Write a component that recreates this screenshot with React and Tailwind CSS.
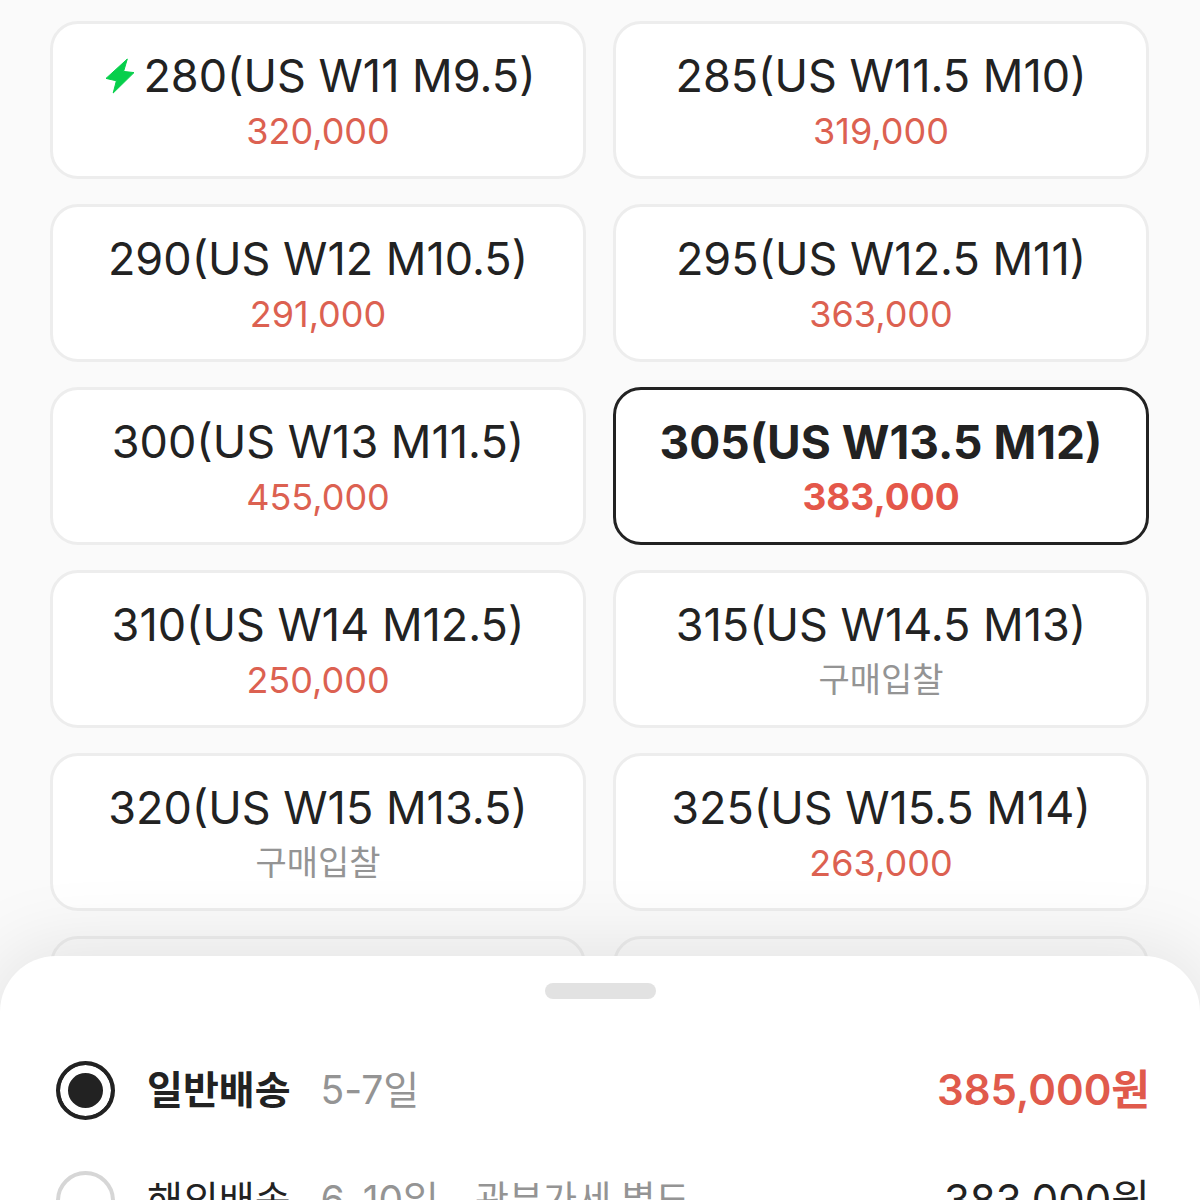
import { useState } from 'react';

const sizes = [
  { label: '280(US W11 M9.5)', price: '320,000', fast: true },
  { label: '285(US W11.5 M10)', price: '319,000' },
  { label: '290(US W12 M10.5)', price: '291,000' },
  { label: '295(US W12.5 M11)', price: '363,000' },
  { label: '300(US W13 M11.5)', price: '455,000' },
  { label: '305(US W13.5 M12)', price: '383,000' },
  { label: '310(US W14 M12.5)', price: '250,000' },
  { label: '315(US W14.5 M13)' },
  { label: '320(US W15 M13.5)' },
  { label: '325(US W15.5 M14)', price: '263,000' },
];

const deliveries = [
  { id: 'normal', name: '일반배송', days: '5-7일', price: '385,000원' },
  { id: 'overseas', name: '해외배송', days: '6-10일', note: '관부가세 별도', price: '383,000원' },
];

const BoltIcon = () => (
  <svg className="h-9 w-[35px] shrink-0" viewBox="-5 0 35 36" fill="#06cf4b" stroke="#06cf4b" strokeWidth="1" strokeLinejoin="round" aria-hidden="true">
    <path d="M22.3 1 L1 20.4 L11.4 22.8 L8.2 35 L29 14.6 L18.6 13.4 Z" />
  </svg>
);

const SizeButton = ({ size, selected, onSelect }) => (
  <button
    type="button"
    aria-pressed={selected}
    onClick={onSelect}
    className={`flex h-[158px] flex-col items-center justify-center rounded-[28px] border-3 bg-white pt-1.5 ${
      selected ? 'border-[#222222] font-bold' : 'border-[#ededed]'
    }`}
  >
    <span className={`flex items-center gap-2 leading-[56px] text-[#222222] ${selected ? 'text-[46px]' : 'text-[45px]'}`}>
      {size.fast && <BoltIcon />}
      {size.label}
    </span>
    {size.price ? (
      <span className={`leading-[54px] ${selected ? 'text-[37px] text-[#e4574a]' : 'text-[36px] text-[#dc6151]'}`}>{size.price}</span>
    ) : (
      <span className="text-[34px] leading-[54px] text-[#949494]">구매입찰</span>
    )}
  </button>
);

const DeliveryOption = ({ option, checked, onChange }) => (
  <label className="flex h-[110px] items-center pr-[50px] pl-14 text-[39px] leading-[56px]">
    <input
      type="radio"
      name="delivery"
      value={option.id}
      checked={checked}
      onChange={onChange}
      className="size-[59px] shrink-0 appearance-none rounded-full border-4 border-[#d6d6d6] bg-white checked:border-[#222222] checked:bg-[#222222] checked:shadow-[inset_0_0_0_8px_white]"
    />
    <span className={`ml-8 text-[#222222] ${checked ? 'font-bold' : ''}`}>{option.name}</span>
    <span className="ml-[30px] text-[#949494]">{option.days}</span>
    {option.note && <span className="ml-9 text-[37px] text-[#949494]">{option.note}</span>}
    <span className={`ml-auto text-[42px] ${checked ? 'font-semibold text-[#e05a4c]' : 'text-[#222222]'}`}>{option.price}</span>
  </label>
);

const App = () => {
  const [selected, setSelected] = useState('305(US W13.5 M12)');
  const [delivery, setDelivery] = useState('normal');

  return (
    <div className="flex h-screen flex-col overflow-hidden bg-[#fafafa] font-['Inter','Noto_Sans_CJK_KR',sans-serif]">
      <main className="min-h-0 flex-1">
        <div className="grid grid-cols-2 gap-x-[27px] gap-y-[25px] pt-[21px] pr-[51px] pl-[50px]">
          {sizes.map((size) => (
            <SizeButton
              key={size.label}
              size={size}
              selected={size.label === selected}
              onSelect={() => setSelected(size.label)}
            />
          ))}
          {/* next row, tucked under the sheet */}
          <div className="h-[158px] rounded-[28px] border-3 border-[#ededed] bg-[#fafafa]"></div>
          <div className="h-[158px] rounded-[28px] border-3 border-[#ededed] bg-[#fafafa]"></div>
        </div>
      </main>

      {/* Bottom sheet */}
      <section className="relative h-[244px] shrink-0 rounded-t-[56px] bg-white shadow-[0_0_80px_6px_rgba(0,0,0,0.1)]">
        <div className="flex justify-center pt-[27px] pb-9">
          <div className="h-4 w-[111px] rounded-full bg-[#e2e2e2]"></div>
        </div>
        {deliveries.map((option) => (
          <DeliveryOption
            key={option.id}
            option={option}
            checked={option.id === delivery}
            onChange={() => setDelivery(option.id)}
          />
        ))}
      </section>
    </div>
  );
};

export default App;
